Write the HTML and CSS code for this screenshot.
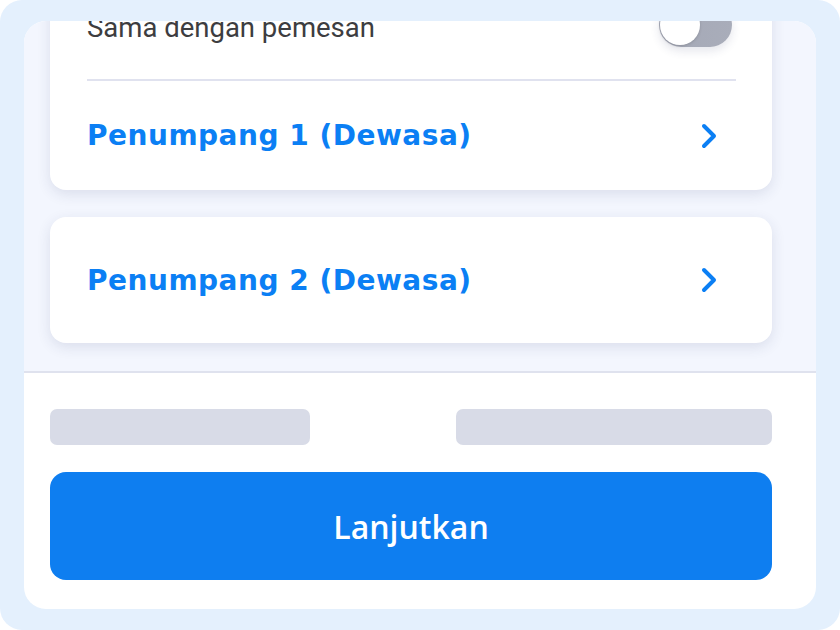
FILE: index.html
```html
<!DOCTYPE html>
<html lang="id">
<head>
    <meta charset="UTF-8">
    <meta name="viewport" content="width=device-width, initial-scale=1.0">
    <title>Detail Penumpang</title>
    <link rel="stylesheet" href="styles.css">
</head>
<body>
    <div class="frame">
        <div class="panel">
            <div class="list">
                <div class="card">
                    <div class="toggle-row">
                        <span class="toggle-label">Sama dengan pemesan</span>
                        <span class="toggle"><span class="knob"></span></span>
                    </div>
                    <div class="divider"></div>
                    <div class="passenger first">
                        <span>Penumpang 1 (Dewasa)</span>
                        <svg class="chevron" width="16" height="26" viewBox="0 0 16 26"><path d="M3 3 L13 13 L3 23" /></svg>
                    </div>
                </div>
                <div class="card">
                    <div class="passenger">
                        <span>Penumpang 2 (Dewasa)</span>
                        <svg class="chevron" width="16" height="26" viewBox="0 0 16 26"><path d="M3 3 L13 13 L3 23" /></svg>
                    </div>
                </div>
            </div>
            <div class="footer">
                <div class="skeletons">
                    <div class="bar short"></div>
                    <div class="bar long"></div>
                </div>
                <button class="btn">Lanjutkan</button>
            </div>
        </div>
    </div>
</body>
</html>
```

FILE: styles.css
```css
body {
    margin: 0;
    background: #ffffff;
    font-family: Roboto, "Open Sans", sans-serif;
}
.frame {
    width: 840px;
    height: 630px;
    box-sizing: border-box;
    padding: 21px 24px;
    background: #e4f0fd;
    border-radius: 22px;
}
.panel {
    height: 588px;
    display: flex;
    flex-direction: column;
    border-radius: 22px;
    overflow: hidden;
    background: #ffffff;
}
.list {
    height: 350px;
    flex-shrink: 0;
    display: flex;
    flex-direction: column;
    justify-content: flex-end;
    gap: 27px;
    padding: 0 44px 28px 26px;
    box-sizing: border-box;
    background: #f3f6fe;
    overflow: hidden;
}
.card {
    flex-shrink: 0;
    background: #ffffff;
    border-radius: 16px;
    padding: 0 36px 0 37px;
    box-shadow: 0 4px 14px rgba(40, 50, 100, 0.12);
}
.toggle-row {
    display: flex;
    align-items: center;
    justify-content: space-between;
    height: 44px;
    margin-top: 24px;
    margin-bottom: 33px;
    padding-right: 4px;
}
.toggle-label {
    font-size: 27.5px;
    color: #3d3d40;
    position: relative;
    top: 3px;
}
.toggle {
    position: relative;
    top: 1px;
    width: 73px;
    height: 44px;
    border-radius: 22px;
    background: linear-gradient(90deg, #a4a8b6, #a9adba);
    box-shadow: 0 4px 10px rgba(40, 50, 100, 0.12);
}
.knob {
    position: absolute;
    left: 1px;
    top: 2px;
    width: 40px;
    height: 40px;
    border-radius: 50%;
    background: #ffffff;
    box-shadow: 0 1px 3px rgba(0, 0, 0, 0.15);
}
.divider {
    height: 2px;
    background: #e0e2ef;
}
.passenger {
    height: 126px;
    display: flex;
    align-items: center;
    justify-content: space-between;
    padding-right: 19px;
    font-family: "DejaVu Sans", sans-serif;
    font-weight: bold;
    font-size: 28px;
    letter-spacing: 0.5px;
    color: #0b7ff4;
}
.passenger.first {
    height: 109px;
}
.chevron path {
    fill: none;
    stroke: #0b7ff4;
    stroke-width: 4;
    stroke-linecap: round;
    stroke-linejoin: round;
}
.footer {
    flex: 1;
    border-top: 2px solid #dfe2ee;
    padding: 36px 44px 29px 26px;
    display: flex;
    flex-direction: column;
    gap: 27px;
}
.skeletons {
    display: flex;
    justify-content: space-between;
}
.bar {
    height: 36px;
    border-radius: 7px;
    background: #d8dbe7;
}
.bar.short { width: 260px; }
.bar.long { width: 316px; }
.btn {
    height: 108px;
    border: none;
    border-radius: 16px;
    background: #0e7ef0;
    color: #ffffff;
    font-family: "Open Sans", sans-serif;
    font-weight: 600;
    font-size: 32px;
    padding: 0;
}
```
